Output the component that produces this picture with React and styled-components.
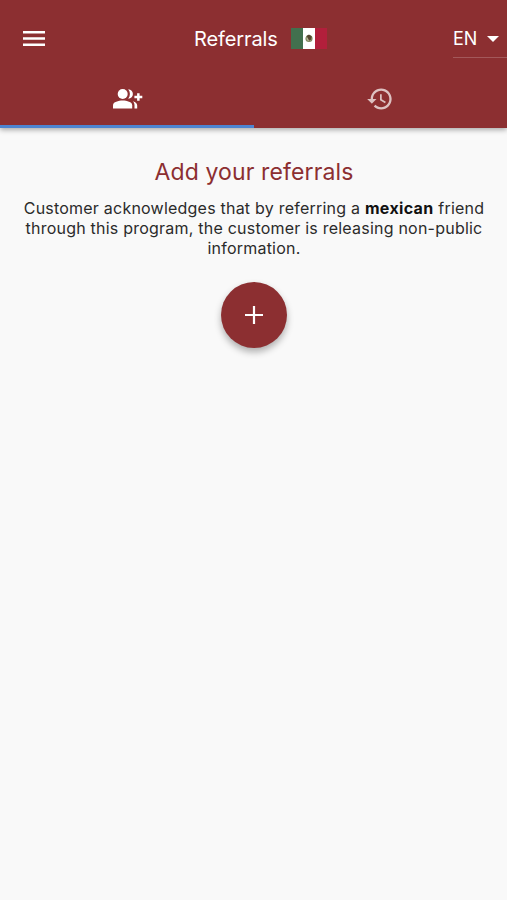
import React from 'react';
import styled, { createGlobalStyle } from 'styled-components';

const C_BRAND = '#8c2f31';
const C_INDICATOR = '#4d84d1';
const C_PAGE = '#f9f9f9';
const C_TEXT = '#2b2b2b';

const GlobalStyle = createGlobalStyle`
  body {
    margin: 0;
    background: ${C_PAGE};
    font-family: Inter, Roboto, sans-serif;
  }
`;

const Page = styled.div`
  min-height: 900px;
  background: ${C_PAGE};
`;

const Header = styled.header`
  height: 128px;
  display: flex;
  flex-direction: column;
  background: ${C_BRAND};
  box-shadow: 0 2px 5px rgba(0, 0, 0, 0.32);
`;

const Toolbar = styled.div`
  height: 70px;
  display: grid;
  grid-template-columns: 68px 1fr 54px;
  padding-top: 1px;
  box-sizing: border-box;
  color: #fff;
`;

const MenuButton = styled.button`
  display: flex;
  align-items: center;
  justify-content: center;
  height: 75px;
  padding: 0;
  border: 0;
  background: none;
  color: inherit;
`;

const Title = styled.h1`
  display: flex;
  align-items: center;
  height: 75px;
  margin: 0;
  padding-left: 126px;
  font-size: 20px;
  font-weight: 400;
  letter-spacing: -0.1px;
`;

const Flag = styled.svg`
  margin-left: 13px;
`;

const Language = styled.div`
  display: flex;
  align-items: center;
  gap: 10px;
  height: 57px;
  padding-top: 19px;
  box-sizing: border-box;
  border-bottom: 1px solid rgba(255, 255, 255, 0.2);
  font-size: 18px;
`;

const Tabs = styled.nav`
  display: grid;
  grid-template-columns: 1fr 1fr;
  flex: 1;
`;

const Tab = styled.button`
  display: flex;
  align-items: center;
  justify-content: center;
  padding: 2px 0 0 ${({ $active }) => ($active ? '2px' : '0')};
  border: 0;
  border-bottom: 3px solid ${({ $active }) => ($active ? C_INDICATOR : 'transparent')};
  background: none;
  color: ${({ $active }) => ($active ? '#fff' : 'rgba(255, 255, 255, 0.7)')};
`;

const Content = styled.main`
  display: flex;
  flex-direction: column;
  align-items: center;
  padding: 30px 20px 0 21px;
  text-align: center;
`;

const Heading = styled.h2`
  margin: 0;
  color: ${C_BRAND};
  font-size: 23px;
  font-weight: 400;
  line-height: 28px;
  letter-spacing: 0.13px;
`;

const Disclaimer = styled.p`
  margin: 12px 0 0;
  color: ${C_TEXT};
  font-size: 16px;
  line-height: 20px;
  letter-spacing: 0.22px;
  white-space: nowrap;

  strong {
    color: #111;
    font-weight: 700;
    letter-spacing: 0.35px;
  }
`;

const AddButton = styled.button`
  display: flex;
  align-items: center;
  justify-content: center;
  width: 66px;
  height: 66px;
  margin-top: 24px;
  padding: 0;
  border: 0;
  border-radius: 50%;
  background: ${C_BRAND};
  color: #fff;
  box-shadow: 0 4px 7px rgba(0, 0, 0, 0.3);
`;

const MenuIcon = () => (
  <svg width="22" height="15" viewBox="0 0 22 15" fill="currentColor">
    <path d="M0 0h22v2.500H0zM0 6.200h22v2.500H0zM0 12.400h22v2.500H0z" />
  </svg>
);

const AddPeopleIcon = () => (
  <svg width="30" height="20" viewBox="0 0 30 20" fill="currentColor">
    <circle cx="9.700" cy="5" r="5" />
    <path d="M0 19.500v-3.300C0 13 5.500 11.500 9.700 11.500s9.500 1.500 9.500 4.700v3.300z" />
    <path d="M15.200.2c3 .2 4.700 2.200 4.700 4.800s-1.700 4.600-4.700 4.800c2.300-2.900 2.300-6.700 0-9.600z" />
    <path d="M19.800 12.200c3 .8 4.400 2.300 4.400 4.300v3h-2.700v-3.300c0-1.600-.6-2.900-1.700-4z" />
    <path d="M24.100 4.200h2.500v2.600h2.700v2.400h-2.700v2.600h-2.500V9.200h-2.700V6.800h2.700z" />
  </svg>
);

const HistoryIcon = () => (
  <svg width="28" height="28" viewBox="0 0 24 24" fill="currentColor">
    <path d="M13 3c-4.970 0-9 4.030-9 9H1l3.890 3.890.07.14L9 12H6c0-3.870 3.130-7 7-7s7 3.130 7 7-3.130 7-7 7c-1.930 0-3.680-.79-4.940-2.060l-1.420 1.420C8.270 19.990 10.510 21 13 21c4.970 0 9-4.030 9-9s-4.030-9-9-9zm-1 5v5l4.280 2.540.72-1.210-3.500-2.080V8H12z" />
  </svg>
);

const MexicoFlag = () => (
  <Flag width="36" height="21" viewBox="0 0 36 21">
    <path fill="#42704e" d="M0 0h12v21H0z" />
    <path fill="#fff" d="M12 0h12v21H12z" />
    <path fill="#b21f3b" d="M24 0h12v21H24z" />
    <circle cx="18" cy="10.500" r="3" fill="#b9b398" stroke="#7f8a62" strokeWidth="1.200" />
    <path fill="#54452f" d="M15.500 8l2.500-1.500 2.700 2-.5 3-2 1.200-1.200-2.200z" />
  </Flag>
);

const App = () => (
  <>
    <GlobalStyle />
    <Page>
      <Header>
        <Toolbar>
          <MenuButton aria-label="Menu">
            <MenuIcon />
          </MenuButton>
          <Title>
            Referrals
            <MexicoFlag />
          </Title>
          <Language>
            EN
            <svg width="12" height="6" viewBox="0 0 12 6" fill="currentColor">
              <path d="M0 0h12L6 6z" />
            </svg>
          </Language>
        </Toolbar>
        <Tabs>
          <Tab $active aria-label="Add referrals">
            <AddPeopleIcon />
          </Tab>
          <Tab aria-label="History">
            <HistoryIcon />
          </Tab>
        </Tabs>
      </Header>
      <Content>
        <Heading>Add your referrals</Heading>
        <Disclaimer>
          Customer acknowledges that by referring a <strong>mexican</strong> friend
          <br />
          through this program, the customer is releasing non-public
          <br />
          information.
        </Disclaimer>
        <AddButton aria-label="Add">
          <svg width="18" height="18" viewBox="0 0 18 18" fill="currentColor">
            <path d="M7.900 0h2.200v7.900H18v2.200h-7.900V18H7.900v-7.900H0V7.900h7.900z" />
          </svg>
        </AddButton>
      </Content>
    </Page>
  </>
);

export default App;
